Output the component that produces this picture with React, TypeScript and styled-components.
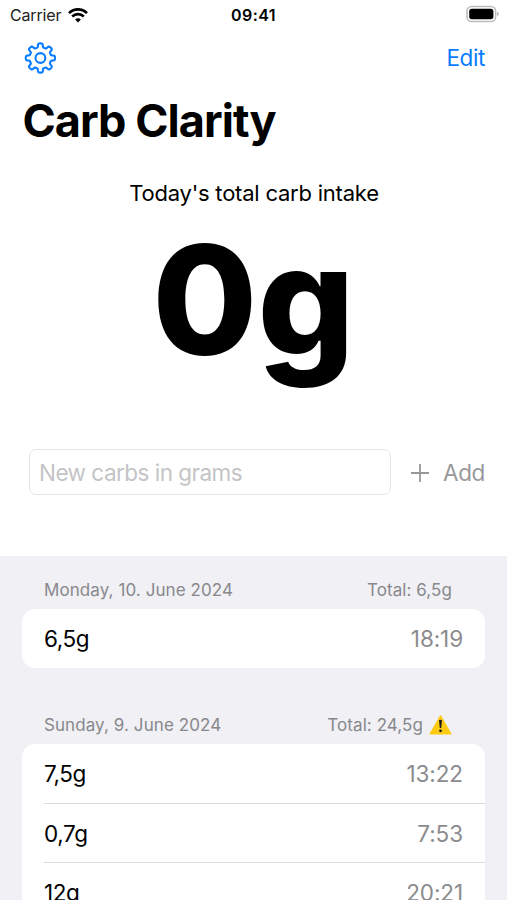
import React from "react";
import styled, { createGlobalStyle } from "styled-components";

const GlobalStyle = createGlobalStyle`
  * { box-sizing: border-box; }
  html, body { margin: 0; padding: 0; background: #fff; overflow: hidden; }
  body { font-family: Inter, "Liberation Sans", sans-serif; color: #000; }
`;

const Screen = styled.main`
  width: 507px;
  height: 900px;
  overflow: hidden;
  display: flex;
  flex-direction: column;
  background: #fff;
`;

const StatusBar = styled.header`
  flex: none;
  height: 30px;
  padding: 0 8px 0 10px;
  display: grid;
  grid-template-columns: 1fr auto 1fr;
  align-items: center;
  font-size: 16px;
  line-height: 30px;
`;

const Carrier = styled.div`
  display: flex;
  align-items: center;
  gap: 7px;
  color: #222;
  letter-spacing: -0.15px;
`;

const Clock = styled.time`
  font-weight: 600;
  letter-spacing: 0.45px;
  padding-right: 2px;
`;

const Battery = styled.svg`
  justify-self: end;
  margin-top: -2px;
`;

const NavBar = styled.nav`
  flex: none;
  height: 56px;
  padding: 0 22px 0 24px;
  display: flex;
  align-items: center;
  justify-content: space-between;
`;

const PlainButton = styled.button<{ $tone: string }>`
  border: 0;
  padding: 0;
  background: none;
  display: flex;
  align-items: center;
  font: inherit;
  font-size: 22.5px;
  line-height: 30px;
  letter-spacing: -0.4px;
  color: ${(p) => p.$tone};
`;

const Title = styled.h1`
  flex: none;
  margin: 0;
  padding: 1px 0 0 22.5px;
  height: 68px;
  font-size: 45px;
  line-height: 68px;
  font-weight: 700;
  letter-spacing: -0.95px;
`;

const Summary = styled.section`
  flex: none;
  height: 296px;
  padding-top: 23px;
  text-align: center;
`;

const SummaryLabel = styled.div`
  padding-left: 1px;
  font-size: 22px;
  line-height: 32px;
  letter-spacing: -0.22px;
`;

const SummaryValue = styled.div`
  margin-top: 1px;
  font-size: 152px;
  line-height: 180px;
  font-weight: 800;
  letter-spacing: 0;
`;

const EntryForm = styled.form`
  flex: none;
  height: 106px;
  padding: 0 22px 0 29px;
  display: flex;
  align-items: flex-start;
`;

const CarbInput = styled.input`
  width: 362px;
  height: 46px;
  margin: -1px 0 0;
  padding: 0 9px;
  border: 1.5px solid #e5e5e5;
  border-radius: 7px;
  background: #fff;
  font: inherit;
  font-size: 22.5px;
  letter-spacing: -0.52px;
  outline: none;
  &::placeholder { color: #c4c4c6; opacity: 1; }
`;

const AddWrap = styled.div`
  height: 46px;
  margin-left: auto;
  display: flex;
  align-items: center;
`;

const PlusIcon = styled.svg`
  margin-right: 13px;
`;

const History = styled.section`
  flex: 1;
  min-height: 0;
  padding: 0 22px;
  background: #f0f0f5;
`;

const Day = styled.section<{ $top: number }>`
  padding-top: ${(p) => p.$top}px;
`;

const DayHeader = styled.header`
  height: 38px;
  padding: 0 33px 0 22px;
  display: flex;
  align-items: center;
  justify-content: space-between;
  font-size: 17px;
  line-height: 38px;
  letter-spacing: 0.08px;
  color: #88888c;
`;

const DayTotal = styled.span`
  display: flex;
  align-items: center;
  gap: 6px;
`;

const EntryList = styled.ul`
  list-style: none;
  margin: 0;
  padding: 0 0 0 22px;
  border-radius: 13px;
  background: #fff;
`;

const Entry = styled.li`
  height: 59px;
  padding-right: 22px;
  display: flex;
  align-items: center;
  justify-content: space-between;
  font-size: 22.5px;
  & + & { border-top: 1px solid #dadadc; }
`;

const Amount = styled.span`
  letter-spacing: -0.4px;
`;

const Time = styled.time`
  color: #8b8b8e;
  letter-spacing: -0.1px;
`;

function gearOutline(cx: number, cy: number) {
  const steps = 192;
  const points: string[] = [];
  for (let i = 0; i < steps; i++) {
    const a = (i / steps) * Math.PI * 2;
    const r = 12.7 + 1.9 * (Math.tanh(2.8 * Math.cos(8 * a)) / Math.tanh(2.8));
    points.push(`${(cx + r * Math.sin(a)).toFixed(2)} ${(cy - r * Math.cos(a)).toFixed(2)}`);
  }
  return `M${points.join("L")}Z`;
}

const GearIcon = () => (
  <svg width="32" height="32" viewBox="0 0 32 32" fill="none" stroke="currentColor" strokeWidth="2.1" strokeLinejoin="round">
    <path d={gearOutline(16.4, 16)} />
    <circle cx="16.4" cy="16" r="4.9" />
  </svg>
);

const WifiIcon = () => (
  <svg width="20" height="15" viewBox="0 0 20 15" fill="none" stroke="#000" strokeWidth="2.6">
    <path d="M1 5.2C6.1.1 13.9.1 19 5.2" />
    <path d="M4.2 8.5C7.5 5.3 12.5 5.3 15.8 8.5" />
    <path d="M7.1 11.4Q10 8.9 12.9 11.4L10 14.4Z" fill="#000" stroke="none" />
  </svg>
);

const BatteryIcon = () => (
  <Battery width="33" height="18" viewBox="0 0 33 18">
    <rect x="1" y="1.5" width="28.6" height="15" rx="4.6" fill="#fff" stroke="#bdbdbd" strokeWidth="1.6" />
    <rect x="3.2" y="3.8" width="24.2" height="10.4" rx="2.6" />
    <path d="M31 7Q32.8 7.6 32.8 9T31 11Z" fill="#b5b5b5" />
  </Battery>
);

const WarningIcon = () => (
  <svg width="23" height="20" viewBox="0 0 23 20">
    <path d="M11.5 1.2L21.7 18.8H1.3Z" fill="#fdcb12" stroke="#fdcb12" strokeWidth="1.6" strokeLinejoin="round" />
    <path d="M10 5.2Q11.5 4.2 13 5.2L12.2 13H10.8Z" fill="#1c1c1c" />
    <circle cx="11.5" cy="15.8" r="1.4" fill="#1c1c1c" />
  </svg>
);

const days = [
  { date: "Monday, 10. June 2024", total: "Total: 6,5g", top: 15, warn: false, entries: [["6,5g", "18:19"]] },
  {
    date: "Sunday, 9. June 2024", total: "Total: 24,5g", top: 38, warn: true,
    entries: [["7,5g", "13:22"], ["0,7g", "7:53"], ["12g", "20:21"]],
  },
];

export default function App() {
  return (
    <Screen>
      <GlobalStyle />
      <StatusBar>
        <Carrier>Carrier <WifiIcon /></Carrier>
        <Clock>09:41</Clock>
        <BatteryIcon />
      </StatusBar>
      <NavBar>
        <PlainButton $tone="#087cff" aria-label="Settings"><GearIcon /></PlainButton>
        <PlainButton $tone="#087cff">Edit</PlainButton>
      </NavBar>
      <Title>Carb Clarity</Title>
      <Summary>
        <SummaryLabel>Today's total carb intake</SummaryLabel>
        <SummaryValue>0g</SummaryValue>
      </Summary>
      <EntryForm onSubmit={(e) => e.preventDefault()}>
        <CarbInput placeholder="New carbs in grams" />
        <AddWrap>
          <PlainButton $tone="#98989a" type="submit">
            <PlusIcon width="20" height="20" viewBox="0 0 20 20" stroke="currentColor" strokeWidth="1.8">
              <path d="M10 1V19M1 10H19" />
            </PlusIcon>
            Add
          </PlainButton>
        </AddWrap>
      </EntryForm>
      <History>
        {days.map((day) => (
          <Day key={day.date} $top={day.top}>
            <DayHeader>
              <span>{day.date}</span>
              <DayTotal>{day.total}{day.warn && <WarningIcon />}</DayTotal>
            </DayHeader>
            <EntryList>
              {day.entries.map(([amount, time]) => (
                <Entry key={time}>
                  <Amount>{amount}</Amount>
                  <Time>{time}</Time>
                </Entry>
              ))}
            </EntryList>
          </Day>
        ))}
      </History>
    </Screen>
  );
}
